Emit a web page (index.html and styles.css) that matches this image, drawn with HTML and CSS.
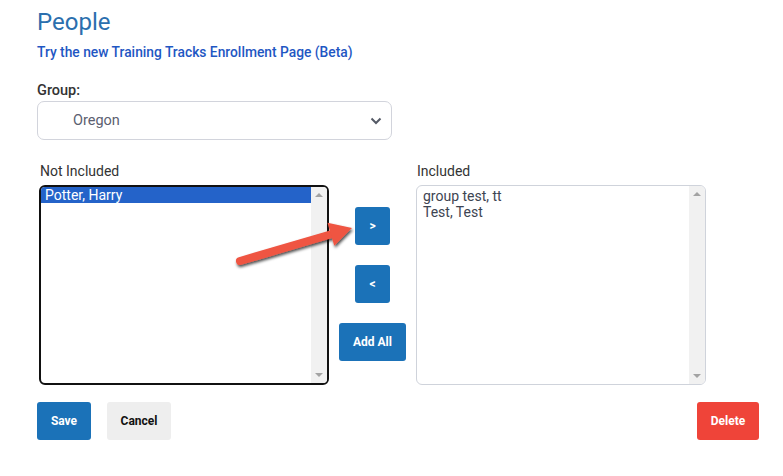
FILE: index.html
```html
<!DOCTYPE html>
<html>
<head>
<meta charset="utf-8">
<link rel="stylesheet" href="styles.css">
</head>
<body>
<div class="page">
  <h1 class="title">People</h1>
  <a class="beta-link" href="#">Try the new Training Tracks Enrollment Page (Beta)</a>

  <div class="group">
    <label class="label">Group:</label>
    <div class="select">
      <span class="select-value">Oregon</span>
      <svg class="chevron" width="12" height="8" viewBox="0 0 12 8"><path d="M1.5 1.5 L6 6 L10.5 1.5" fill="none" stroke="#555a66" stroke-width="2"/></svg>
    </div>
  </div>

  <div class="lists">
    <div class="col">
      <div class="col-label">Not Included</div>
      <div class="listbox listbox-active">
        <div class="list-items">
          <div class="item item-selected">Potter, Harry</div>
        </div>
        <div class="scrollbar">
          <span class="tri-up"></span>
          <span class="tri-down"></span>
        </div>
      </div>
    </div>

    <div class="mid">
      <button class="btn btn-blue btn-sq">&gt;</button>
      <button class="btn btn-blue btn-sq">&lt;</button>
      <button class="btn btn-blue btn-addall">Add All</button>
    </div>

    <div class="col">
      <div class="col-label">Included</div>
      <div class="listbox">
        <div class="list-items list-plain">
          <div class="item">group test, tt</div>
          <div class="item">Test, Test</div>
        </div>
        <div class="scrollbar">
          <span class="tri-up"></span>
          <span class="tri-down"></span>
        </div>
      </div>
    </div>
  </div>

  <div class="actions">
    <div class="actions-left">
      <button class="btn btn-blue btn-save">Save</button>
      <button class="btn btn-grey btn-cancel">Cancel</button>
    </div>
    <button class="btn btn-red btn-delete">Delete</button>
  </div>

  <svg class="arrow" width="783" height="476" viewBox="0 0 783 476">
    <defs>
      <filter id="sh" x="-20%" y="-50%" width="140%" height="200%">
        <feDropShadow dx="1" dy="2" stdDeviation="1.8" flood-color="#000" flood-opacity="0.7"/>
      </filter>
    </defs>
    <g filter="url(#sh)" fill="#ef5442">
      <path d="M240 261 L332 234" stroke="#ef5442" stroke-width="8" stroke-linecap="round"/>
      <polygon points="352,228 334.3,245.7 327.5,222.7"/>
    </g>
  </svg>
</div>
</body>
</html>
```

FILE: styles.css
```css
html, body {
  margin: 0;
  padding: 0;
  background: #fff;
}
body {
  font-family: Roboto, "Liberation Sans", Arial, sans-serif;
  color: #333;
}
.page {
  position: relative;
  width: 783px;
  height: 476px;
  padding: 0 0 0 37px;
  box-sizing: border-box;
}
.title {
  margin: 0;
  padding-top: 7px;
  font-size: 24px;
  font-weight: 400;
  line-height: 30px;
  color: #2b6fae;
}
.beta-link {
  display: block;
  margin-top: 6px;
  font-size: 13.8px;
  font-weight: 500;
  line-height: 18px;
  color: #1f57c3;
  text-decoration: none;
}
.group {
  margin-top: 21px;
}
.label {
  display: block;
  font-size: 14.5px;
  font-weight: 500;
  line-height: 18px;
  color: #333;
}
.select {
  margin-top: 1px;
  width: 355px;
  height: 39px;
  box-sizing: border-box;
  border: 1px solid #d2d4dc;
  border-radius: 7px;
  display: flex;
  align-items: center;
  justify-content: space-between;
  padding: 0 9px 0 35px;
}
.select-value {
  font-size: 14.5px;
  color: #5b6070;
}
.chevron {
  display: block;
}
.lists {
  margin-top: 22px;
  display: flex;
  align-items: flex-start;
}
.col {
  display: flex;
  flex-direction: column;
}
.col:first-child {
  margin-left: 2px;
}
.col-label {
  font-size: 14px;
  line-height: 18px;
  color: #333;
  padding-left: 1px;
  margin-bottom: 5px;
}
.listbox {
  width: 290px;
  height: 200px;
  box-sizing: border-box;
  border: 1px solid #cfd3db;
  border-radius: 6px;
  display: flex;
  overflow: hidden;
}
.listbox-active {
  border: 2px solid #111;
}
.list-items {
  flex: 1;
  padding: 0;
}
.list-plain {
  padding-top: 2px;
}
.item {
  font-size: 14px;
  line-height: 16px;
  padding-left: 6px;
  color: #3d4452;
}
.listbox-active .item {
  padding-left: 4px;
}
.item-selected {
  background: #2463c9;
  color: #fff;
}
.scrollbar {
  position: relative;
  width: 16px;
  background: #f1f1f1;
}
.tri-up, .tri-down {
  position: absolute;
  left: 4px;
  width: 0;
  height: 0;
  border-left: 4px solid transparent;
  border-right: 4px solid transparent;
}
.tri-up {
  top: 6px;
  border-bottom: 4px solid #a3a3a3;
}
.tri-down {
  bottom: 6px;
  border-top: 4px solid #a3a3a3;
}
.mid {
  width: 87px;
  margin-top: 45px;
  display: flex;
  flex-direction: column;
  align-items: center;
  gap: 20px;
}
.btn {
  border: none;
  font-family: Roboto, "Liberation Sans", Arial, sans-serif;
  font-weight: 700;
  font-size: 12px;
  border-radius: 3px;
  cursor: pointer;
  padding: 0;
}
.btn-blue {
  background: #1b72b8;
  color: #fff;
}
.btn-grey {
  background: #eeeeee;
  color: #111;
}
.btn-red {
  background: #ef4439;
  color: #fff;
}
.btn-sq {
  width: 35px;
  height: 38px;
}
.btn-addall {
  width: 67px;
  height: 38px;
}
.actions {
  margin-top: 17px;
  width: 722px;
  display: flex;
  justify-content: space-between;
}
.actions-left {
  display: flex;
  gap: 16px;
}
.btn-save {
  width: 54px;
  height: 38px;
}
.btn-cancel {
  width: 64px;
  height: 38px;
}
.btn-delete {
  width: 62px;
  height: 38px;
}
.arrow {
  position: absolute;
  left: 0;
  top: 0;
  pointer-events: none;
}
```
